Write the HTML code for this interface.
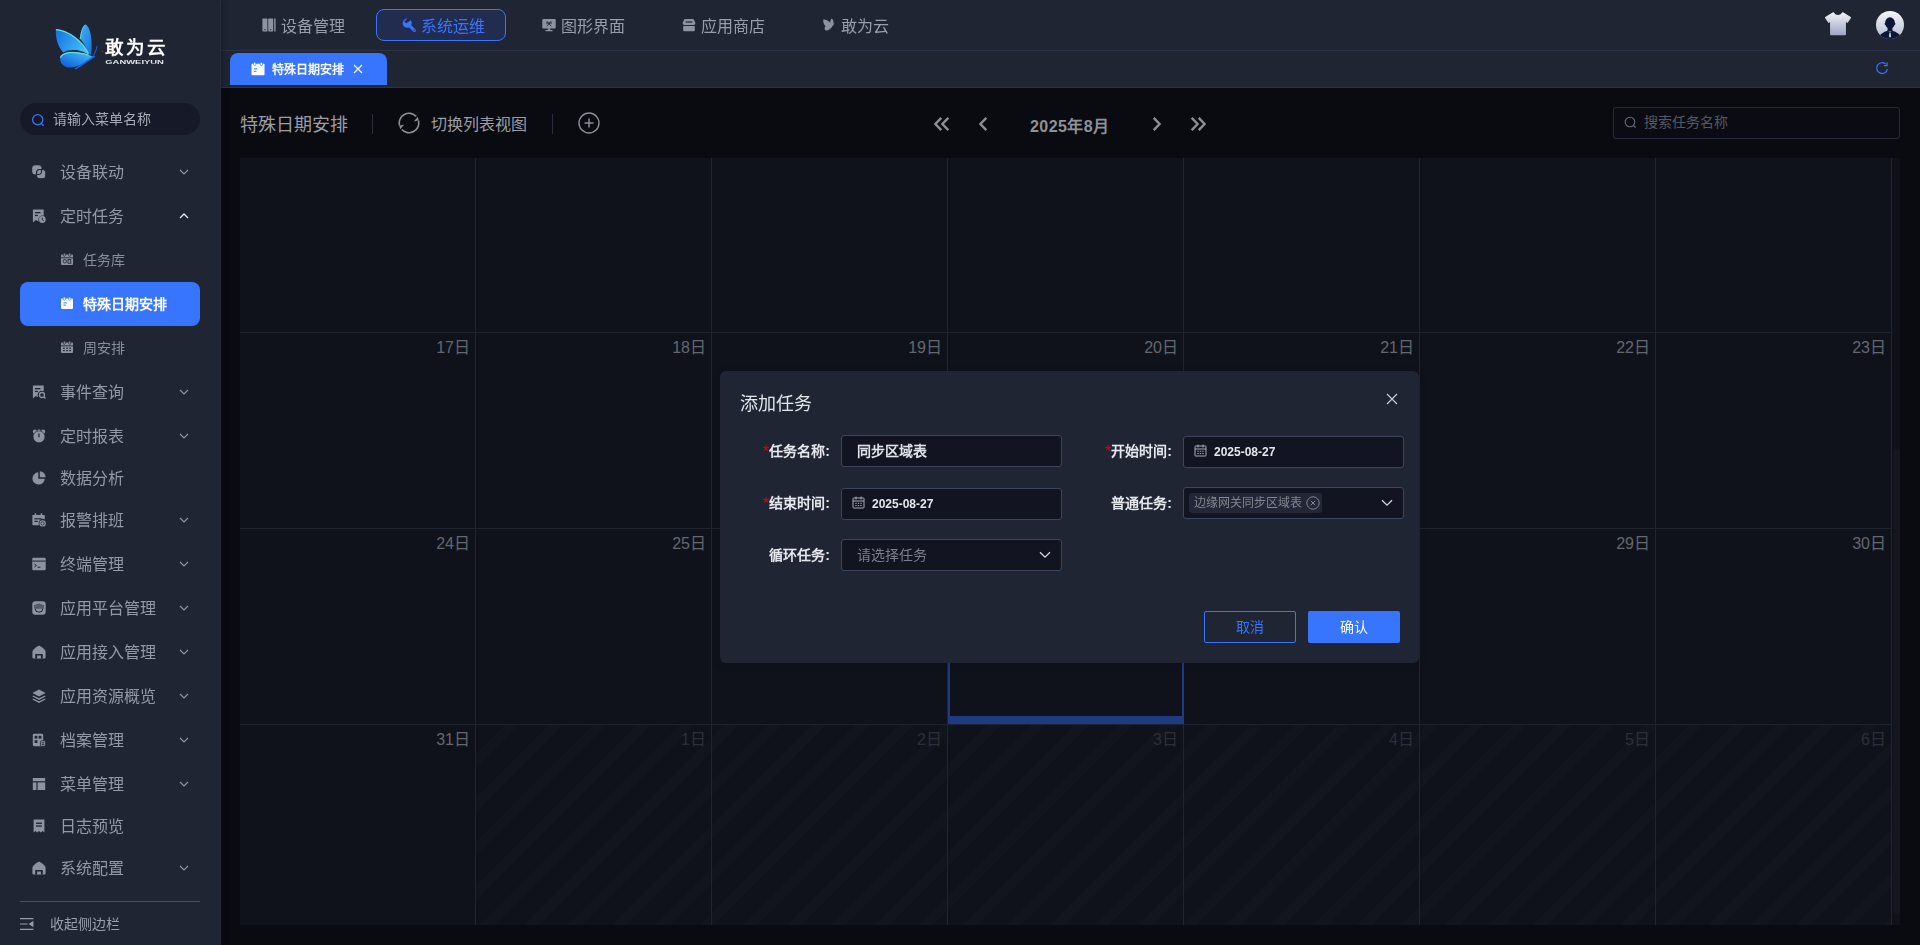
<!DOCTYPE html>
<html lang="zh-CN">
<head>
<meta charset="utf-8">
<title>特殊日期安排</title>
<style>
*{box-sizing:border-box;margin:0;padding:0}
html,body{width:1920px;height:945px;overflow:hidden;background:#0a0b11;font-family:"Liberation Sans",sans-serif;color:#c9ccd4}
.abs{position:absolute}
svg{display:block}
#side,#top,#tabs,#modal{will-change:transform}
#main{position:absolute;left:0;top:0;width:1920px;height:945px}
/* ---------- sidebar ---------- */
#side{position:absolute;left:0;top:0;width:221px;height:945px;background:#1f2533;border-right:1px solid #272d3e;box-shadow:2px 0 6px rgba(0,0,0,.22);z-index:5}
#side .search{position:absolute;left:20px;top:103px;width:180px;height:32px;border-radius:16px;background:#161a28}
#side .search span{position:absolute;left:33px;top:0;line-height:32px;font-size:14px;color:#a6aab4}
.mi{position:absolute;left:0;width:220px;height:44px;line-height:44px;font-size:16px;color:#9599a5}
.mi .ic{position:absolute;left:32px;top:15px;width:14px;height:14px}
.mi .tx{position:absolute;left:60px;top:1px;white-space:nowrap}
.mi .ar{position:absolute;left:179px;top:18px;width:10px;height:8px}
.mi.leaf{height:40px;line-height:40px}
.mi.leaf .ic{top:13px}
.si{position:absolute;left:20px;width:180px;height:44px;line-height:44px;font-size:14px;color:#8a8e9a;border-radius:8px}
.si .ic{position:absolute;left:41px;top:15px;width:12px;height:12px}
.si .tx{position:absolute;left:63px;top:0;white-space:nowrap}
.si.on{background:#3875ff;color:#fff;font-weight:bold}
/* ---------- top ---------- */
#top{position:absolute;left:221px;top:0;width:1699px;height:51px;background:#1f2533;border-bottom:1px solid #2c3246;z-index:4}
#tabs{position:absolute;left:221px;top:51px;width:1699px;height:37px;background:#1f2533;border-bottom:1px solid #2c3246;z-index:4}
.nav{position:absolute;top:9px;height:32px;width:130px;line-height:32px;font-size:16px;color:#999da8;border-radius:8px}
.nav .ic{position:absolute;left:26px;top:9px;width:14px;height:14px}
.nav .tx{position:absolute;left:45px;top:2px;white-space:nowrap}
.nav.on{border:1px solid #3875ff;background:#212c4f;color:#3875ff}
.nav.on .ic{left:25px;top:8px}
.nav.on .tx{left:44px;top:1px}
/*MAINCSS*/
#cal{position:absolute;left:240px;top:158px;width:1660px;height:767px;background:#0f121b;overflow:hidden}
#cal .hl{left:0;width:1652px;height:1px;background:#1f2431}
#cal .vl{top:0;width:1px;height:767px;background:#1f2431}
#cal .dl{width:236px;padding-right:6px;text-align:right;line-height:24px;font-size:16px;color:#64676f;white-space:nowrap}
#cal .dl.dim{color:#2c2f39}
#cal .nm{background:repeating-linear-gradient(135deg,rgba(255,255,255,0) 0,rgba(255,255,255,0) 20px,rgba(255,255,255,.013) 21px,rgba(255,255,255,.013) 30px,rgba(255,255,255,0) 31px)}
/*/MAINCSS*//*MODALCSS*/
#modal{position:absolute;left:720px;top:371px;width:699px;height:292px;background:#1f2533;border-radius:6px;box-shadow:0 2px 10px rgba(0,0,0,.12);z-index:10}
#modal .lb{width:110px;text-align:right;line-height:22px;font-size:14px;font-weight:bold;color:#e6e8ee;white-space:nowrap}
#modal .lb i{font-style:normal;color:#e3000f;font-weight:normal;font-size:16px;line-height:22px;position:relative;top:1px;margin-right:0}
#modal .in{width:221px;height:32px;border:1px solid #3a4561;border-radius:3px;background:#121521}
#modal .in .v{position:absolute;top:0;line-height:30px;font-size:14px;font-weight:bold;color:#dfe2ea;white-space:nowrap}
#modal .in .ph{position:absolute;top:0;line-height:30px;font-size:14px;color:#7b7f8a;white-space:nowrap}
#modal .in .d{position:absolute;left:30px;top:0;line-height:30px;font-size:12px;font-weight:bold;color:#e3e6ed;white-space:nowrap}
#modal .tag{left:5px;top:5px;width:133px;height:20px;border-radius:3px;background:#222637}
#modal .tag span{position:absolute;left:5px;top:0;line-height:20px;font-size:12px;color:#82868f;white-space:nowrap}
#modal .btn{width:92px;height:32px;border-radius:2px;text-align:center;font-size:14px}
/*/MODALCSS*/</style>
</head>
<body>
<!-- ================= SIDEBAR ================= -->
<div id="side">
  <!--LOGO-->
  <svg class="abs" style="left:50px;top:20px" width="60" height="55" viewBox="0 0 60 55">
    <defs>
      <linearGradient id="lg1" x1="0" y1="0.3" x2="1" y2="0.7"><stop offset="0" stop-color="#1877e6"/><stop offset="1" stop-color="#48c4f6"/></linearGradient>
      <linearGradient id="lg2" x1="0" y1="1" x2="1" y2="0"><stop offset="0" stop-color="#0b55dc"/><stop offset="1" stop-color="#49c6f6"/></linearGradient>
      <linearGradient id="lg3" x1="0" y1="0" x2="1" y2="1"><stop offset="0" stop-color="#3fb4f2"/><stop offset="1" stop-color="#1a6fe4"/></linearGradient>
    </defs>
    <path d="M35.400 4.800C39.800 5.500 43 19 41.200 34.600L38.600 34.400C37 28 34 23 30.200 18.900C31 12 33 6.200 35.400 4.800Z" fill="url(#lg3)"/>
    <path d="M35.400 4.800C33 6.200 31 12 30.200 18.900" fill="none" stroke="#62e2da" stroke-width="1"/>
    <path d="M38.600 34.800C34 22 18 10 5.900 9.100C5.300 18 8 27.500 13.300 32.400C20 28.500 32 29.500 38.600 34.800Z" fill="url(#lg1)"/>
    <path d="M5.900 9.600C18 10.500 33 21 38.300 33.600" fill="none" stroke="#62e2da" stroke-width="1.300"/>
    <path d="M10.100 38C11.500 31.800 22 29.600 38.600 34.800L43.300 36.800C36 42.500 28 47.300 20 47.600C14 47.500 9.800 43.500 10.100 38Z" fill="url(#lg2)"/>
    <path d="M10.400 37.800C12 32.400 22 30.200 38.400 35" fill="none" stroke="#62e2da" stroke-width="1.300"/>
    <path d="M26 48.600L44.300 36.300" stroke="#1468f0" stroke-width="1.700" stroke-linecap="round"/>
    <path d="M43.600 35.400C45.500 32 46.600 28.500 47.100 25.900" fill="none" stroke="#1468f0" stroke-width="0.900"/>
    <circle cx="52.600" cy="31.300" r="0.600" fill="#1468f0"/>
  </svg>
  <div class="abs" style="left:105.300px;top:35.500px;width:62px;height:24px;line-height:24px;font-size:18.500px;font-weight:bold;color:#fff;letter-spacing:1.700px;white-space:nowrap">敢为云</div>
  <svg class="abs" style="left:105px;top:58px" width="61" height="8" viewBox="0 0 61 8"><text x="0.300" y="6.300" font-family="Liberation Sans, sans-serif" font-size="5.700" font-weight="bold" fill="#dfe2e9" textLength="58.600" lengthAdjust="spacingAndGlyphs">GANWEIYUN</text></svg>
  <!--/LOGO-->
  <div class="search">
    <svg class="abs" style="left:10.500px;top:9.500px" width="15" height="15" viewBox="0 0 15 15"><circle cx="6.700" cy="6.700" r="5.100" fill="none" stroke="#3875ff" stroke-width="1.300"/><path d="M10.400 10.600l2 1.800" stroke="#3875ff" stroke-width="1.300" stroke-linecap="round"/></svg>
    <span>请输入菜单名称</span>
  </div>
  <!--MENU-->
  <div class="mi" style="top:150px"><svg class="ic" width="14" height="14" viewBox="0 0 14 14"><rect x="0.200" y="0.200" width="9.300" height="9.300" rx="3.200" fill="#8f93a0"/><rect x="4.500" y="4.500" width="9.300" height="9.300" rx="3.200" fill="#8f93a0" stroke="#1f2533" stroke-width="1.100"/><path d="M4.500 9.400V7.700a3.200 3.200 0 0 1 3.200-3.200h1.700" fill="none" stroke="#1f2533" stroke-width="1.100"/><path d="M9.500 4.600v1.700a3.200 3.200 0 0 1-3.200 3.200H4.600" fill="none" stroke="#1f2533" stroke-width="1.100"/><rect x="5.600" y="5.600" width="2.800" height="2.800" rx="1" fill="#8f93a0"/></svg><span class="tx">设备联动</span><svg class="ar" width="10" height="8" viewBox="0 0 10 8"><path d="M1 2l4 4 4-4" fill="none" stroke="#8f94a1" stroke-width="1.200"/></svg></div>
  <div class="mi" style="top:194px"><svg class="ic" width="14" height="14" viewBox="0 0 14 14"><path d="M0.900 0.600h10.800v6.200a4.300 4.300 0 0 0-5.200 5.600L3.800 11 0.900 13.400z" fill="#8f93a0"/><rect x="2.900" y="3" width="5.600" height="1.300" fill="#1f2533"/><rect x="2.900" y="5.800" width="3" height="1.300" fill="#1f2533"/><circle cx="10.300" cy="10.500" r="3.400" fill="#8f93a0"/><path d="M10.300 8.700v2l1.400 1" stroke="#1f2533" stroke-width="1" fill="none"/></svg><span class="tx">定时任务</span><svg class="ar" width="10" height="8" viewBox="0 0 10 8"><path d="M1 6l4-4 4 4" fill="none" stroke="#e4e6ec" stroke-width="1.400"/></svg></div>
  <div class="si" style="top:238px"><svg class="ic" width="12" height="12" viewBox="0 0 12 12"><rect x="0" y="1.600" width="12" height="10.300" rx=".8" fill="#8f93a0"/><rect x="2.300" y="0.100" width="2" height="3.200" rx=".8" fill="#8f93a0" stroke="#1f2533" stroke-width=".7"/><rect x="7.700" y="0.100" width="2" height="3.200" rx=".8" fill="#8f93a0" stroke="#1f2533" stroke-width=".7"/><rect x="0" y="4.400" width="12" height=".9" fill="#1f2533"/><circle cx="3.800" cy="8.300" r="1.700" fill="none" stroke="#1f2533" stroke-width=".9"/><rect x="7" y="6.600" width="2.800" height="3.600" fill="none" stroke="#1f2533" stroke-width=".9"/></svg><span class="tx">任务库</span></div>
  <div class="si on" style="top:282px"><svg class="ic" width="12" height="12" viewBox="0 0 12 12"><rect x="0" y="1.600" width="12" height="10.300" rx=".8" fill="#fff"/><rect x="2.300" y="0.100" width="2" height="3.200" rx=".8" fill="#fff" stroke="#3875ff" stroke-width=".7"/><rect x="7.700" y="0.100" width="2" height="3.200" rx=".8" fill="#fff" stroke="#3875ff" stroke-width=".7"/><rect x="2.400" y="5.400" width="3.400" height="1" fill="#3875ff"/><rect x="2.400" y="7.600" width="2.400" height="1" fill="#3875ff"/></svg><span class="tx">特殊日期安排</span></div>
  <div class="si" style="top:326px"><svg class="ic" width="12" height="12" viewBox="0 0 12 12"><rect x="0" y="1.600" width="12" height="10.300" rx=".8" fill="#8f93a0"/><rect x="2.300" y="0.100" width="2" height="3.200" rx=".8" fill="#8f93a0" stroke="#1f2533" stroke-width=".7"/><rect x="7.700" y="0.100" width="2" height="3.200" rx=".8" fill="#8f93a0" stroke="#1f2533" stroke-width=".7"/><rect x="0" y="4.400" width="12" height=".9" fill="#1f2533"/><rect x="2.0" y="6.6" width="1.800" height="1.200" fill="#1f2533"/><rect x="5.1" y="6.6" width="1.800" height="1.200" fill="#1f2533"/><rect x="8.2" y="6.6" width="1.800" height="1.200" fill="#1f2533"/><rect x="2.0" y="9.0" width="1.800" height="1.200" fill="#1f2533"/><rect x="5.1" y="9.0" width="1.800" height="1.200" fill="#1f2533"/><rect x="8.2" y="9.0" width="1.800" height="1.200" fill="#1f2533"/></svg><span class="tx">周安排</span></div>
  <div class="mi" style="top:370px"><svg class="ic" width="14" height="14" viewBox="0 0 14 14"><path d="M0.900 0.600h10.800v5.600a4.200 4.200 0 0 0-5.400 6L3.800 11 0.900 13.400z" fill="#8f93a0"/><rect x="2.900" y="3" width="5.600" height="1.300" fill="#1f2533"/><rect x="2.900" y="5.800" width="3" height="1.300" fill="#1f2533"/><circle cx="10" cy="10" r="2.500" fill="none" stroke="#8f93a0" stroke-width="1.300"/><path d="M11.800 11.800l1.700 1.700" stroke="#8f93a0" stroke-width="1.400"/></svg><span class="tx">事件查询</span><svg class="ar" width="10" height="8" viewBox="0 0 10 8"><path d="M1 2l4 4 4-4" fill="none" stroke="#8f94a1" stroke-width="1.200"/></svg></div>
  <div class="mi" style="top:414px"><svg class="ic" width="14" height="14" viewBox="0 0 14 14"><circle cx="2.900" cy="2.700" r="2.100" fill="#8f93a0"/><circle cx="11.100" cy="2.700" r="2.100" fill="#8f93a0"/><circle cx="7" cy="7.800" r="6" fill="#8f93a0" stroke="#1f2533" stroke-width=".7"/><path d="M7 4.400v3.800" stroke="#1f2533" stroke-width="1.200"/><rect x="5.600" y="0.600" width="2.800" height="1.200" fill="#8f93a0"/></svg><span class="tx">定时报表</span><svg class="ar" width="10" height="8" viewBox="0 0 10 8"><path d="M1 2l4 4 4-4" fill="none" stroke="#8f94a1" stroke-width="1.200"/></svg></div>
  <div class="mi leaf" style="top:458px"><svg class="ic" width="14" height="14" viewBox="0 0 14 14"><path d="M6.3 1.2a6.2 6.2 0 1 0 6.5 6.5H6.3z" fill="#8f93a0"/><path d="M7.8 0.3a6 6 0 0 1 5.9 5.9H7.8z" fill="#8f93a0"/></svg><span class="tx">数据分析</span></div>
  <div class="mi" style="top:498px"><svg class="ic" width="14" height="14" viewBox="0 0 14 14"><path d="M0.400 2h11.600a.8.8 0 0 1 .8.800v3.600a4.200 4.200 0 0 0-5.600 5.800H1.200a.8.8 0 0 1-.8-.8z" fill="#8f93a0"/><rect x="2.600" y="0.300" width="1.700" height="3" rx=".7" fill="#8f93a0"/><rect x="8.600" y="0.300" width="1.700" height="3" rx=".7" fill="#8f93a0"/><rect x="2.400" y="5.200" width="7" height="1.200" fill="#1f2533"/><rect x="2.400" y="7.800" width="3.400" height="1.200" fill="#1f2533"/><circle cx="10.600" cy="10.400" r="3.200" fill="#8f93a0"/><circle cx="10.600" cy="10.400" r="1.700" fill="none" stroke="#1f2533" stroke-width=".7"/></svg><span class="tx">报警排班</span><svg class="ar" width="10" height="8" viewBox="0 0 10 8"><path d="M1 2l4 4 4-4" fill="none" stroke="#8f94a1" stroke-width="1.200"/></svg></div>
  <div class="mi" style="top:542px"><svg class="ic" width="14" height="14" viewBox="0 0 14 14"><rect x="0.300" y="0.800" width="13.400" height="12.400" rx="1" fill="#8f93a0"/><rect x="0.300" y="3.600" width="13.400" height="1" fill="#1f2533"/><path d="M2.400 7l2 1.500-2 1.500" stroke="#1f2533" stroke-width="1" fill="none"/><rect x="5.600" y="9.700" width="2.800" height="1" fill="#1f2533"/></svg><span class="tx">终端管理</span><svg class="ar" width="10" height="8" viewBox="0 0 10 8"><path d="M1 2l4 4 4-4" fill="none" stroke="#8f94a1" stroke-width="1.200"/></svg></div>
  <div class="mi" style="top:586px"><svg class="ic" width="14" height="14" viewBox="0 0 14 14"><rect x="0.300" y="0.300" width="13.400" height="13.400" rx="3" fill="#8f93a0"/><path d="M3 4.200v3a4 4 0 0 0 8 0v-3M5 3.400v4M7 3v4.400M9 3.400v4" stroke="#1f2533" stroke-width="1" fill="none" stroke-linecap="round"/></svg><span class="tx">应用平台管理</span><svg class="ar" width="10" height="8" viewBox="0 0 10 8"><path d="M1 2l4 4 4-4" fill="none" stroke="#8f94a1" stroke-width="1.200"/></svg></div>
  <div class="mi" style="top:630px"><svg class="ic" width="14" height="14" viewBox="0 0 14 14"><path d="M7 0.500C3.400 2.400 0.400 4.800 0.400 7v5.600a.8.8 0 0 0 .8.800h11.600a.8.8 0 0 0 .8-.8V7C13.600 4.800 10.600 2.400 7 0.500Z" fill="#8f93a0"/><path d="M3.200 13.400V9.600a.7.7 0 0 1 .7-.7h6.200a.7.7 0 0 1 .7.700v3.800z" fill="#1f2533"/><rect x="5.100" y="10.500" width="3.800" height="2.900" fill="#8f93a0"/></svg><span class="tx">应用接入管理</span><svg class="ar" width="10" height="8" viewBox="0 0 10 8"><path d="M1 2l4 4 4-4" fill="none" stroke="#8f94a1" stroke-width="1.200"/></svg></div>
  <div class="mi" style="top:674px"><svg class="ic" width="14" height="14" viewBox="0 0 14 14"><path d="M7 0.6l6.6 3.4L7 7.4.4 4z" fill="#8f93a0"/><path d="M.8 7l6.2 3.2L13.200 7M.8 10l6.2 3.200L13.200 10" stroke="#8f93a0" stroke-width="1.4" fill="none"/></svg><span class="tx">应用资源概览</span><svg class="ar" width="10" height="8" viewBox="0 0 10 8"><path d="M1 2l4 4 4-4" fill="none" stroke="#8f94a1" stroke-width="1.200"/></svg></div>
  <div class="mi" style="top:718px"><svg class="ic" width="14" height="14" viewBox="0 0 14 14"><rect x="0.8" y="0.8" width="10.4" height="12.4" rx="1.4" fill="#8f93a0"/><rect x="2.6" y="2.8" width="2.8" height="2.8" fill="#1f2533"/><rect x="6.6" y="2.8" width="2.8" height="2.8" fill="#1f2533"/><rect x="2.6" y="7.2" width="2.800" height="2.8" fill="#1f2533"/><rect x="8.4" y="7.800" width="5.2" height="5.4" rx="1" fill="#8f93a0" stroke="#1f2533" stroke-width=".8"/><path d="M9.600 9.800h2.800M9.600 11.400h2.800" stroke="#1f2533" stroke-width=".8"/></svg><span class="tx">档案管理</span><svg class="ar" width="10" height="8" viewBox="0 0 10 8"><path d="M1 2l4 4 4-4" fill="none" stroke="#8f94a1" stroke-width="1.200"/></svg></div>
  <div class="mi" style="top:762px"><svg class="ic" width="14" height="14" viewBox="0 0 14 14"><rect x="0.8" y="1" width="12.4" height="3.2" fill="#8f93a0"/><rect x="0.8" y="5.400" width="3.600" height="7.600" fill="#8f93a0"/><rect x="5.600" y="5.400" width="7.600" height="7.600" fill="#8f93a0"/></svg><span class="tx">菜单管理</span><svg class="ar" width="10" height="8" viewBox="0 0 10 8"><path d="M1 2l4 4 4-4" fill="none" stroke="#8f94a1" stroke-width="1.200"/></svg></div>
  <div class="mi leaf" style="top:806px"><svg class="ic" width="14" height="14" viewBox="0 0 14 14"><path d="M1.600 0.600h10.800v12.800l-1.800-1.400-1.800 1.400-1.800-1.400-1.800 1.400-1.800-1.400-1.800 1.400z" fill="#8f93a0"/><rect x="4" y="3.600" width="6" height="1.300" fill="#1f2533"/><rect x="4" y="6.400" width="6" height="1.300" fill="#1f2533"/></svg><span class="tx">日志预览</span></div>
  <div class="mi" style="top:846px"><svg class="ic" width="14" height="14" viewBox="0 0 14 14"><path d="M7 0.500C3.400 2.400 0.400 4.800 0.400 7v5.600a.8.8 0 0 0 .8.800h11.600a.8.8 0 0 0 .8-.8V7C13.600 4.800 10.600 2.400 7 0.500Z" fill="#8f93a0"/><path d="M3.200 13.400V9.600a.7.7 0 0 1 .7-.7h6.200a.7.7 0 0 1 .7.700v3.800z" fill="#1f2533"/><rect x="5.100" y="10.500" width="3.800" height="2.900" fill="#8f93a0"/></svg><span class="tx">系统配置</span><svg class="ar" width="10" height="8" viewBox="0 0 10 8"><path d="M1 2l4 4 4-4" fill="none" stroke="#8f94a1" stroke-width="1.200"/></svg></div>
  <div class="abs" style="left:20px;top:901px;width:180px;height:1px;background:#484e66"></div>
  <svg class="abs" style="left:20px;top:916.500px" width="15" height="14" viewBox="0 0 15 14"><path d="M0 1.600h13.400M0 7h7.600M0 12.400h13.400" stroke="#9a9eaa" stroke-width="1.200" fill="none"/><path d="M13.400 3.800v6.400l-4.600-3.200z" fill="#9a9eaa"/></svg>
  <div class="abs" style="left:50px;top:914px;line-height:20px;font-size:14px;color:#9a9eaa;white-space:nowrap">收起侧边栏</div>
  <!--/MENU-->
</div>
<!-- ================= TOP NAV ================= -->
<div id="top">
  <!--NAV-->
  <div class="nav" style="left:15px"><svg class="ic" width="14" height="14" viewBox="0 0 14 14"><rect x="0.400" y="0.500" width="5" height="13" rx=".8" fill="#8f93a0"/><rect x="6.200" y="0.500" width="5" height="13" rx=".8" fill="#8f93a0"/><rect x="12.200" y="0.500" width="1.400" height="13" fill="#8f93a0"/><circle cx="2.900" cy="11.600" r=".7" fill="#1f2533"/><circle cx="8.700" cy="11.600" r=".7" fill="#1f2533"/></svg><span class="tx">设备管理</span></div>
  <div class="nav on" style="left:155px"><svg class="ic" width="14" height="14" viewBox="0 0 14 14"><path d="M5.500 0.600a4.600 4.600 0 0 0-4.700 5.800a4.600 4.600 0 0 0 6.300 3l4.200 4.200a1.500 1.500 0 0 0 2.200-2.200L9.300 7.200a4.600 4.600 0 0 0-1.200-5.400L5.700 4.300 4.300 5.300 2.200 3.400z" fill="#3875ff"/><path d="M6.700 0.800L4.400 3.300l1.300 1.300L8.300 2.200z" fill="#212c4f"/><circle cx="12.200" cy="12.300" r=".7" fill="#212c4f"/></svg><span class="tx">系统运维</span></div>
  <div class="nav" style="left:295px"><svg class="ic" width="14" height="14" viewBox="0 0 14 14"><rect x="0.300" y="1" width="13.400" height="9.400" rx="1.200" fill="#8f93a0"/><rect x="5.800" y="10.400" width="2.400" height="1.600" fill="#8f93a0"/><rect x="3.400" y="11.900" width="7.200" height="1.300" rx=".5" fill="#8f93a0"/><path d="M4.800 3.200l4.400 5M9.200 3.200l-4.400 5M4 5h6" stroke="#1f2533" stroke-width=".9" fill="none"/></svg><span class="tx">图形界面</span></div>
  <div class="nav" style="left:435px"><svg class="ic" width="14" height="14" viewBox="0 0 14 14"><path d="M2.600 1h8.800l2 3.800a2 2 0 0 1-2 2.200H2.600a2 2 0 0 1-2-2.200z" fill="#8f93a0"/><rect x="1.200" y="7.800" width="11.600" height="5.400" rx="1" fill="#8f93a0"/><rect x="3.600" y="3.400" width="6.800" height="1.200" fill="#1f2533"/><rect x="0.600" y="7" width="12.800" height=".9" fill="#1f2533"/></svg><span class="tx">应用商店</span></div>
  <div class="nav" style="left:575px"><svg class="ic" width="14" height="14" viewBox="0 0 14 14"><path d="M9.400 6.800C8.200 3.600 4.400 1.400 1.200 1.600C1 4.600 2 7 3.600 8.200C2.400 9 2.200 11 3.400 12.200C5.400 13.600 8.600 11 10.400 8.200L11.800 6.600 12.600 4.600 11.400 6C11.800 3.600 11 0.800 9.800 0.400C8.800 1 8.200 3 8.200 4.600C8.800 5.200 9.200 6 9.400 6.800Z" fill="#8f93a0"/></svg><span class="tx">敢为云</span></div>
  <svg class="abs" style="left:1603px;top:11px" width="28" height="25" viewBox="0 0 28 25"><defs><linearGradient id="tg" x1="0" y1="0" x2="0" y2="1"><stop offset="0" stop-color="#f1f2f6"/><stop offset="1" stop-color="#9ea7c5"/></linearGradient></defs><path d="M9.300 1.800L1.600 6.600l3 4.600 2.100-1.100V23.600h14.600V10.100l2.100 1.100 3-4.600-7.700-4.800C17.600 3.600 16 4.600 14 4.600S10.400 3.600 9.300 1.800Z" fill="url(#tg)" stroke="url(#tg)" stroke-width="1.200" stroke-linejoin="round"/></svg>
  <svg class="abs" style="left:1655px;top:11px" width="28" height="28" viewBox="0 0 28 28"><defs><clipPath id="ac"><circle cx="14" cy="14" r="14"/></clipPath><linearGradient id="ag" x1="0" y1="0" x2="0" y2="1"><stop offset="0" stop-color="#f4f5f8"/><stop offset="1" stop-color="#b4bcd4"/></linearGradient></defs><circle cx="14" cy="14" r="14" fill="url(#ag)"/><g clip-path="url(#ac)"><ellipse cx="14" cy="12" rx="4.900" ry="5.800" fill="#0c1736"/><ellipse cx="14" cy="12.800" rx="5.500" ry="1.600" fill="#0c1736"/><path d="M11.600 15.500h4.800v5h-4.800z" fill="#0c1736"/><path d="M2 28C3.500 23 7.500 21.400 11.600 19.600L14 21.600l2.400-2C20.500 21.400 24.500 23 26 28Z" fill="#0c1736"/><path d="M13.400 21.800h1.200l.5 3.600-1.100 1.300-1.100-1.300z" fill="#c9d0e4"/></g></svg>
  <!--/NAV-->
</div>
<div id="tabs">
  <!--TABS-->
  <div class="abs" style="left:9px;top:2px;width:157px;height:32px;background:#3875ff;border-radius:8px 8px 0 0"></div>
  <svg class="abs" style="left:30px;top:11px" width="14" height="14" viewBox="0 0 14 14"><rect x="0.500" y="1.800" width="13" height="11.400" rx=".8" fill="#fff"/><rect x="2.600" y="0.300" width="2.200" height="3.200" rx="1" fill="#fff" stroke="#3875ff" stroke-width=".7"/><rect x="9.200" y="0.300" width="2.200" height="3.200" rx="1" fill="#fff" stroke="#3875ff" stroke-width=".7"/><rect x="2.800" y="6.400" width="3.600" height="1" fill="#3875ff"/><rect x="2.800" y="8.800" width="2.600" height="1" fill="#3875ff"/></svg>
  <div class="abs" style="left:51px;top:3px;line-height:32px;font-size:12px;font-weight:bold;color:#fff;white-space:nowrap">特殊日期安排</div>
  <svg class="abs" style="left:132px;top:13px" width="10" height="10" viewBox="0 0 10 10"><path d="M1 1l8 8M9 1l-8 8" stroke="#fff" stroke-width="1.100"/></svg>
  <svg class="abs" style="left:1654px;top:10px" width="14" height="14" viewBox="0 0 14 14"><path d="M10.570 2.960A5.400 5.400 0 1 0 12.420 8.040" fill="none" stroke="#3875ff" stroke-width="1.200"/><path d="M12.100 1.400v3.300H8.800" fill="none" stroke="#3875ff" stroke-width="1.200"/></svg>
  <!--/TABS-->
</div>
<!-- ================= CONTENT ================= -->
<div id="main">
  <!--MAIN-->
  <div class="abs" style="left:240px;top:113px;line-height:24px;font-size:18px;color:#9a9da6;white-space:nowrap">特殊日期安排</div>
  <div class="abs" style="left:372px;top:114px;width:1px;height:20px;background:#2b2f3b"></div>
  <svg class="abs" style="left:398px;top:112px" width="22" height="22" viewBox="0 0 22 22"><path d="M1.600 13.500A9.700 9.700 0 0 1 18.200 4.500M20.400 8.500A9.700 9.700 0 0 1 3.800 17.500" fill="none" stroke="#8b8e97" stroke-width="1.600"/><path d="M20.800 8.300l-5 1.300 3.900-4.900z" fill="#8b8e97"/><path d="M1.200 13.700l5-1.300-3.900 4.900z" fill="#8b8e97"/></svg>
  <div class="abs" style="left:431px;top:113px;line-height:24px;font-size:16px;color:#9a9da6;white-space:nowrap">切换列表视图</div>
  <div class="abs" style="left:552px;top:114px;width:1px;height:20px;background:#2b2f3b"></div>
  <svg class="abs" style="left:578px;top:112px" width="22" height="22" viewBox="0 0 22 22"><circle cx="11" cy="11" r="10" fill="none" stroke="#8b8e97" stroke-width="1.400"/><path d="M11 6.500v9M6.500 11h9" stroke="#8b8e97" stroke-width="1.500"/></svg>
  <svg class="abs" style="left:933px;top:116px" width="17" height="16" viewBox="0 0 17 16"><path d="M8.300 1.800L2.400 8l5.900 6.200 M15.300 1.800L9.400 8l5.900 6.200" fill="none" stroke="#8b8e97" stroke-width="2.400"/></svg>
  <svg class="abs" style="left:978px;top:116px" width="10" height="16" viewBox="0 0 10 16"><path d="M8.300 1.800L2.400 8l5.900 6.200" fill="none" stroke="#8b8e97" stroke-width="2.400"/></svg>
  <div class="abs" style="left:1030px;top:115px;width:79px;text-align:center;line-height:24px;font-size:16px;font-weight:bold;color:#8f9199;letter-spacing:.45px;white-space:nowrap">2025年8月</div>
  <svg class="abs" style="left:1152px;top:116px" width="10" height="16" viewBox="0 0 10 16"><path d="M1.700 1.800L7.600 8l-5.900 6.200" fill="none" stroke="#8b8e97" stroke-width="2.400"/></svg>
  <svg class="abs" style="left:1190px;top:116px" width="17" height="16" viewBox="0 0 17 16"><path d="M1.700 1.800L7.600 8l-5.900 6.200 M8.700 1.800L14.600 8l-5.900 6.200" fill="none" stroke="#8b8e97" stroke-width="2.400"/></svg>
  <div class="abs" style="left:1613px;top:107px;width:287px;height:32px;border:1px solid #252a3b;border-radius:3px;background:#0b0c13"></div>
  <svg class="abs" style="left:1624px;top:116px" width="13" height="13" viewBox="0 0 13 13"><circle cx="6" cy="6" r="4.800" fill="none" stroke="#6b6e78" stroke-width="1.100"/><path d="M9.500 9.500l2 2" stroke="#6b6e78" stroke-width="1.100"/></svg>
  <div class="abs" style="left:1644px;top:107px;line-height:31px;font-size:14px;color:#545862;white-space:nowrap">搜索任务名称</div>
  <div id="cal">
  <div class="abs nm" style="left:236px;top:567px;width:1415px;height:200px"></div>
  <div class="abs hl" style="top:174px"></div>
  <div class="abs hl" style="top:370px"></div>
  <div class="abs hl" style="top:566px"></div>
  <div class="abs vl" style="left:235px"></div>
  <div class="abs vl" style="left:471px"></div>
  <div class="abs vl" style="left:707px"></div>
  <div class="abs vl" style="left:943px"></div>
  <div class="abs vl" style="left:1179px"></div>
  <div class="abs vl" style="left:1415px"></div>
  <div class="abs vl" style="left:1651px"></div>
  <div class="abs dl" style="left:0px;top:178px">17日</div>
  <div class="abs dl" style="left:236px;top:178px">18日</div>
  <div class="abs dl" style="left:472px;top:178px">19日</div>
  <div class="abs dl" style="left:708px;top:178px">20日</div>
  <div class="abs dl" style="left:944px;top:178px">21日</div>
  <div class="abs dl" style="left:1180px;top:178px">22日</div>
  <div class="abs dl" style="left:1416px;top:178px">23日</div>
  <div class="abs dl" style="left:0px;top:374px">24日</div>
  <div class="abs dl" style="left:236px;top:374px">25日</div>
  <div class="abs dl" style="left:472px;top:374px">26日</div>
  <div class="abs dl" style="left:708px;top:374px">27日</div>
  <div class="abs dl" style="left:944px;top:374px">28日</div>
  <div class="abs dl" style="left:1180px;top:374px">29日</div>
  <div class="abs dl" style="left:1416px;top:374px">30日</div>
  <div class="abs dl" style="left:0px;top:570px">31日</div>
  <div class="abs dl dim" style="left:236px;top:570px">1日</div>
  <div class="abs dl dim" style="left:472px;top:570px">2日</div>
  <div class="abs dl dim" style="left:708px;top:570px">3日</div>
  <div class="abs dl dim" style="left:944px;top:570px">4日</div>
  <div class="abs dl dim" style="left:1180px;top:570px">5日</div>
  <div class="abs dl dim" style="left:1416px;top:570px">6日</div>
  <div class="abs" style="left:708px;top:370px;width:236px;height:196px;border:2px solid #1e3a82;border-bottom-width:8px"></div>
  <div class="abs" style="left:1653px;top:291px;width:7px;height:465px;border-radius:0 0 4px 4px;background:#13161f"></div>
  </div>
  <!--/MAIN-->
</div>
<!-- ================= MODAL ================= -->
<div id="modal">
  <!--MODAL-->
  <div class="abs" style="left:19.700000000000045px;top:21px;line-height:24px;font-size:18px;color:#e3e5eb;white-space:nowrap">添加任务</div>
  <svg class="abs" style="left:666px;top:22px" width="12" height="12" viewBox="0 0 12 12"><path d="M1 1l10 10M11 1L1 11" stroke="#c9ccd4" stroke-width="1.200"/></svg>
  <div class="abs lb" style="left:-0.20000000000004547px;top:68.5px"><i>*</i>任务名称:</div>
  <div class="abs in" style="left:121px;top:64px"><span class="v" style="left:15px">同步区域表</span></div>
  <div class="abs lb" style="left:341.79999999999995px;top:69.0px"><i>*</i>开始时间:</div>
  <div class="abs in" style="left:463px;top:65px"><svg class="abs" style="left:10px;top:7px" width="13" height="13" viewBox="0 0 13 13"><rect x="1" y="2" width="11" height="10" rx="0.600" fill="none" stroke="#a9adb8" stroke-width="1"/><path d="M1 5h11M4 0.500v3M9 0.500v3" stroke="#a9adb8" stroke-width="1" fill="none"/><path d="M3.300 7.300h1.400M5.800 7.300h1.400M8.300 7.300h1.400M3.300 9.600h1.400M5.800 9.600h1.400M8.300 9.600h1.400" stroke="#a9adb8" stroke-width="1"/></svg><span class="d">2025-08-27</span></div>
  <div class="abs lb" style="left:-0.20000000000004547px;top:121.0px"><i>*</i>结束时间:</div>
  <div class="abs in" style="left:121px;top:117px"><svg class="abs" style="left:10px;top:7px" width="13" height="13" viewBox="0 0 13 13"><rect x="1" y="2" width="11" height="10" rx="0.600" fill="none" stroke="#a9adb8" stroke-width="1"/><path d="M1 5h11M4 0.500v3M9 0.500v3" stroke="#a9adb8" stroke-width="1" fill="none"/><path d="M3.300 7.300h1.400M5.800 7.300h1.400M8.300 7.300h1.400M3.300 9.600h1.400M5.800 9.600h1.400M8.300 9.600h1.400" stroke="#a9adb8" stroke-width="1"/></svg><span class="d">2025-08-27</span></div>
  <div class="abs lb" style="left:341.79999999999995px;top:120.5px">普通任务:</div>
  <div class="abs in" style="left:463px;top:116px"><div class="abs tag"><span>边缘网关同步区域表</span><svg class="abs" style="left:117px;top:3px" width="14" height="14" viewBox="0 0 14 14"><circle cx="7" cy="7" r="6.200" fill="none" stroke="#82868f" stroke-width="1"/><path d="M4.800 4.800l4.400 4.400M9.200 4.800l-4.400 4.400" stroke="#82868f" stroke-width="1"/></svg></div><svg class="abs" style="right:10.500px;top:11.200px" width="12" height="8" viewBox="0 0 12 8"><path d="M1 1.200l5 5 5-5" fill="none" stroke="#d5d8df" stroke-width="1.300"/></svg></div>
  <div class="abs lb" style="left:-0.20000000000004547px;top:172.5px">循环任务:</div>
  <div class="abs in" style="left:121px;top:168px"><span class="ph" style="left:15px">请选择任务</span><svg class="abs" style="right:10.500px;top:11.200px" width="12" height="8" viewBox="0 0 12 8"><path d="M1 1.200l5 5 5-5" fill="none" stroke="#d5d8df" stroke-width="1.300"/></svg></div>
  <div class="abs btn" style="left:484px;top:240px;border:1px solid #3875ff;color:#3875ff;line-height:30px">取消</div>
  <div class="abs btn" style="left:588px;top:240px;background:#3875ff;color:#fff;line-height:32px">确认</div>
  <!--/MODAL-->
</div>
</body>
</html>
